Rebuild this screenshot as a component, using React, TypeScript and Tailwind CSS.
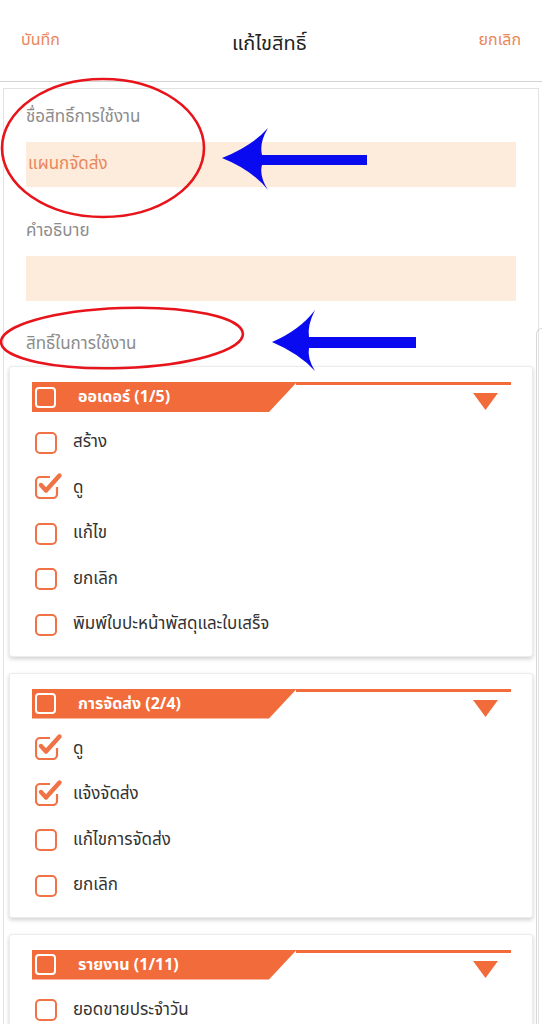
import React from 'react';

type Perm = { label: string; checked: boolean };
type Group = { title: string; items: Perm[] };

const GROUPS: Group[] = [
    {
        title: 'ออเดอร์',
        items: [
            { label: 'สร้าง', checked: false },
            { label: 'ดู', checked: true },
            { label: 'แก้ไข', checked: false },
            { label: 'ยกเลิก', checked: false },
            { label: 'พิมพ์ใบปะหน้าพัสดุและใบเสร็จ', checked: false },
        ],
    },
    {
        title: 'การจัดส่ง',
        items: [
            { label: 'ดู', checked: true },
            { label: 'แจ้งจัดส่ง', checked: true },
            { label: 'แก้ไขการจัดส่ง', checked: false },
            { label: 'ยกเลิก', checked: false },
        ],
    },
    {
        title: 'รายงาน',
        items: [
            { label: 'ยอดขายประจำวัน', checked: false },
            { label: 'ยอดขายรายเดือน', checked: false },
            { label: 'สินค้าขายดี', checked: true },
        ],
    },
];

// report group has 11 rows in the app, only the first few are on screen
const TOTALS: Record<string, number> = { รายงาน: 11 };

const FONT = { fontFamily: '"Noto Sans Thai", "Noto Sans", "Liberation Sans", sans-serif' };

function CheckIcon({ checked }: { checked: boolean }) {
    if (!checked) {
        return <span className="block h-[22px] w-[22px] shrink-0 rounded-[5px] border-2 border-[#f07245]" />;
    }
    return (
        <svg width="28" height="27" viewBox="0 0 28 27" className="-mt-[5px] shrink-0">
            <path
                d="M15 5 H5 a4 4 0 0 0 -4 4 V22 a4 4 0 0 0 4 4 H18 a4 4 0 0 0 4 -4 V15"
                fill="none"
                stroke="#f07245"
                strokeWidth="2.2"
            />
            <path d="M6 13 L11 18.5 L24.5 3.5" fill="none" stroke="#f07245" strokeWidth="4.4" strokeLinecap="round" strokeLinejoin="round" />
        </svg>
    );
}

function GroupCard({ group }: { group: Group }) {
    const done = group.items.filter((i) => i.checked).length;
    const total = TOTALS[group.title] ?? group.items.length;
    return (
        <div className="mx-[5px] rounded-[3px] border border-[#ececec] bg-white pb-[8px] pl-[22px] pr-[21px] pt-[15px] shadow-[0_2px_4px_rgba(0,0,0,0.18)]">
            <div className="flex h-[30px]">
                <div className="flex w-[265px] shrink-0 items-center bg-[#f26b3a] pl-[3px] [clip-path:polygon(0_0,100%_0,calc(100%-28px)_100%,0_100%)]">
                    <span className="block h-[21px] w-[21px] rounded-[4px] border-2 border-white" />
                    <span className="ml-[22px] text-[16px] font-bold text-white">
                        {group.title} ({done}/{total})
                    </span>
                </div>
                <div className="-ml-[1px] flex flex-1 justify-end border-t-[3px] border-[#f26b3a] pr-[13px] pt-[8px]">
                    <svg width="25" height="17" viewBox="0 0 25 17">
                        <path d="M0 0 H25 L12.5 17 Z" fill="#f26b3a" />
                    </svg>
                </div>
            </div>
            <div className="mt-[8px]">
                {group.items.map((item, idx) => (
                    <div key={idx} className="flex h-[45.5px] items-center pl-[3px]">
                        <div className="flex w-[38px] items-center">
                            <CheckIcon checked={item.checked} />
                        </div>
                        <span className="text-[17px] text-[#333]">{item.label}</span>
                    </div>
                ))}
            </div>
        </div>
    );
}

export default function App() {
    return (
        <div className="relative min-h-[1024px] overflow-hidden bg-white" style={FONT}>
            {/* top bar */}
            <div className="flex h-[82px] items-center justify-between border-b border-[#d4d4d4] px-[21px]">
                <span className="-mt-[2px] text-[16px] text-[#e9875b]">บันทึก</span>
                <span className="mt-[6px] text-[20px] text-[#222]">แก้ไขสิทธิ์</span>
                <span className="-mt-[2px] text-[16px] text-[#e9875b]">ยกเลิก</span>
            </div>

            {/* form */}
            <div className="mx-[3px] mt-[6px] border border-[#e2e2e2] pb-[20px] pt-[17px]">
                <div className="px-[22px]">
                    <div className="text-[17px] leading-[22px] text-[#8c8c8c]">ชื่อสิทธิ์การใช้งาน</div>
                    <div className="mt-[14px] flex h-[45px] items-center bg-[#fdebdb] px-[2px] text-[17px] text-[#e9875b]">
                        แผนกจัดส่ง
                    </div>
                    <div className="mt-[33px] text-[17px] leading-[22px] text-[#8c8c8c]">คำอธิบาย</div>
                    <div className="mt-[14px] h-[45px] bg-[#fdebdb]" />
                    <div className="mt-[32px] text-[17px] leading-[22px] text-[#8c8c8c]">สิทธิ์ในการใช้งาน</div>
                </div>
                <div className="mt-[11px] flex flex-col gap-[16px]">
                    {GROUPS.map((g) => (
                        <GroupCard key={g.title} group={g} />
                    ))}
                </div>
            </div>

            {/* edge of the sheet behind */}
            <div className="pointer-events-none absolute left-[536px] top-[328px] h-[800px] w-[12px] rounded-tl-[6px] border-l border-t border-[#d8d8d8]" />

            {/* annotations */}
            <svg className="pointer-events-none absolute left-0 top-0" width="542" height="400" viewBox="0 0 542 400">
                <ellipse cx="103" cy="148" rx="101" ry="69" fill="none" stroke="#e8141b" strokeWidth="2.6" />
                <ellipse cx="122" cy="338" rx="121" ry="30" fill="none" stroke="#e8141b" strokeWidth="2.6" transform="rotate(-2 122 338)" />
                <path
                    d="M222 158 Q252 146 268 128 Q259 143 262 155 L367 155 L367 165 L262 165 Q259 176 268 190 Q252 170 222 158 Z"
                    fill="#0a0af0"
                />
                <path
                    d="M272 342 Q300 330 315 310 Q307 326 309 337 L416 337 L416 348 L309 348 Q307 358 315 371 Q300 354 272 342 Z"
                    fill="#0a0af0"
                />
            </svg>
        </div>
    );
}
